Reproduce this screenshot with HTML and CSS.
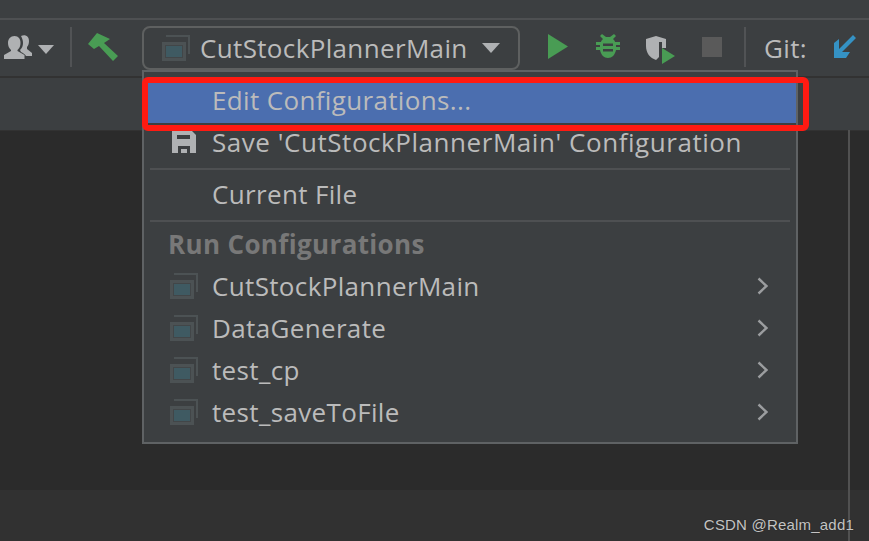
FILE: index.html
```html
<!DOCTYPE html>
<html lang="en">
<head>
<meta charset="utf-8">
<title>Run configurations</title>
<link rel="stylesheet" href="styles.css">
</head>
<body>
<svg class="defs" width="0" height="0">
  <defs>
    <g id="cfg">
      <path d="M4 0H28V19H26V2H4Z" fill="#4c5254"/>
      <rect x="1.500" y="8.500" width="21" height="16" fill="#424648" stroke="#4c5254" stroke-width="3"/>
      <rect x="4" y="11" width="16" height="11" fill="#3f5a62"/>
    </g>
    <path id="chev" d="M1.500 1.500L9.500 9L1.500 16.500" fill="none" stroke="#9b9d9f" stroke-width="2.400"/>
  </defs>
</svg>
<div class="app">
  <div class="top-strip"></div>
  <div class="toolbar">
    <svg class="ico-user" width="28" height="24" viewBox="0 0 28 24"><path fill="#afb1b3" d="M17 1c4-2 8 0 8 5 0 3-1 5-2 6v2l5 4v3h-6c-1-2-3-3-5-4l-1-2c2-2 3-4 3-7 0-3-1-5-2-7Z"/><path fill="#afb1b3" d="M10.500 1c4 0 6 3 6 7 0 3-1 5-3 7v1l7 4v4H0v-4l7-4v-1C5 13 4 11 4 8c0-4 2.500-7 6.500-7Z"/></svg>
    <svg class="ico-caret" width="16" height="9" viewBox="0 0 16 9"><path fill="#afb1b3" d="M0 0H16L8 9Z"/></svg>
    <div class="sep sep-a"></div>
    <svg class="ico-hammer" width="30" height="28" viewBox="0 0 30 28"><path fill="#499c54" d="M0 11L9 0 22 6 16 10 30 23 25 28 11 13 6 16Z"/></svg>
    <div class="combo">
      <svg class="cfg-ico" width="28" height="26" viewBox="0 0 28 26"><use href="#cfg"/></svg>
      <span class="combo-label">CutStockPlannerMain</span>
      <svg class="ico-caret-b" width="18" height="10" viewBox="0 0 18 10"><path fill="#afb1b3" d="M0 0H18L9 10Z"/></svg>
    </div>
    <svg class="ico-run" width="20" height="25" viewBox="0 0 20 25"><path fill="#499c54" d="M0 0L20 12.500 0 25Z"/></svg>
    <svg class="ico-bug" width="24" height="25" viewBox="0 0 24 25"><path fill="#499c54" d="M6 0l4 3h4l4-3 2 2-3 3c1 1 2 2 2 3h5v3h-4v2h4v3h-4c-1 5-4 8-8 8s-7-3-8-8H0v-3h4v-2H0V8h5c0-1 1-2 2-3L4 2Z"/><path fill="#3c3f41" d="M7 9.500h10V12H7zM7 15h10v2.500H7z"/></svg>
    <svg class="ico-cover" width="29" height="28" viewBox="0 0 29 28"><path fill="#afb1b3" d="M0 3L10 0 20 3V12H16V6H13V21L10 24C4 22 0 17 0 10Z"/><path fill="#499c54" d="M16 12L29 20 16 28Z"/></svg>
    <div class="stop"></div>
    <div class="sep sep-b"></div>
    <span class="git">Git:</span>
    <svg class="ico-git" width="22" height="23" viewBox="0 0 22 23"><path fill="#3592c4" d="M19 0l3 3L8 17h8l-4 6H0V8l5-4v10Z"/></svg>
  </div>
  <div class="tabbar"></div>
  <div class="editor"></div>
  <div class="statusbar"></div>
  <div class="vline"></div>

  <div class="menu">
    <div class="item selected"><span class="icon-slot"></span><span>Edit Configurations...</span></div>
    <div class="item save"><span class="icon-slot"><svg class="save-ico" width="24" height="22" viewBox="0 0 24 22"><path fill="#afb1b3" fill-rule="evenodd" d="M0 0H20L24 4V22H0ZM5 4V8H18V4ZM6 15V22H18V15Z"/><rect x="9" y="18" width="6" height="4" fill="#afb1b3"/></svg></span><span>Save 'CutStockPlannerMain' Configuration</span></div>
    <div class="divider"></div>
    <div class="item plain"><span class="icon-slot"></span><span>Current File</span></div>
    <div class="divider"></div>
    <div class="heading">Run Configurations</div>
    <div class="item run"><span class="icon-slot"><svg width="28" height="26" viewBox="0 0 28 26"><use href="#cfg"/></svg></span><span class="grow">CutStockPlannerMain</span><svg class="chev" width="11" height="18" viewBox="0 0 11 18"><use href="#chev"/></svg></div>
    <div class="item run"><span class="icon-slot"><svg width="28" height="26" viewBox="0 0 28 26"><use href="#cfg"/></svg></span><span class="grow">DataGenerate</span><svg class="chev" width="11" height="18" viewBox="0 0 11 18"><use href="#chev"/></svg></div>
    <div class="item run"><span class="icon-slot"><svg width="28" height="26" viewBox="0 0 28 26"><use href="#cfg"/></svg></span><span class="grow">test_cp</span><svg class="chev" width="11" height="18" viewBox="0 0 11 18"><use href="#chev"/></svg></div>
    <div class="item run"><span class="icon-slot"><svg width="28" height="26" viewBox="0 0 28 26"><use href="#cfg"/></svg></span><span class="grow">test_saveToFile</span><svg class="chev" width="11" height="18" viewBox="0 0 11 18"><use href="#chev"/></svg></div>
  </div>
  <div class="highlight"></div>
  <div class="watermark">CSDN @Realm_add1</div>
</div>
</body>
</html>
```
FILE: styles.css
```css
* { box-sizing: border-box; }
html, body { margin: 0; padding: 0; }
body { width: 869px; height: 541px; overflow: hidden; background: #2b2b2b; font-family: "Open Sans", "Noto Sans", sans-serif; }
.defs { position: absolute; }
.app { position: relative; width: 869px; height: 541px; display: flex; flex-direction: column; overflow: hidden; }
.top-strip { height: 20px; background: #3c3f41; border-bottom: 2px solid #4e5052; }
.toolbar { height: 58px; background: #3c3f41; border-bottom: 2px solid #323232; display: flex; align-items: center; position: relative; flex: none; }
.ico-user { margin-left: 4px; margin-top: -3px; flex: none; }
.ico-caret { margin-left: 6px; margin-top: 2px; flex: none; }
.sep { width: 2px; height: 40px; background: #515355; margin-top: -2px; flex: none; }
.sep-a { margin-left: 16px; }
.ico-hammer { margin-left: 16px; flex: none; margin-top: -2px; }
.combo { margin-left: 24px; margin-top: -1px; width: 378px; height: 44px; border: 2px solid #5e6060; border-radius: 8px; display: flex; align-items: center; padding-left: 18px; flex: none; }
.cfg-ico { flex: none; }
.combo-label { margin-left: 10px; font-size: 26px; letter-spacing: 0.35px; color: #bbbbbb; white-space: nowrap; }
.ico-caret-b { margin-left: auto; margin-right: 18px; flex: none; }
.ico-run { margin-left: 28px; margin-top: -3px; flex: none; }
.ico-bug { margin-left: 28px; margin-top: -3px; flex: none; }
.ico-cover { margin-left: 26px; margin-top: 4px; flex: none; }
.stop { margin-left: 27px; margin-top: -2px; width: 20px; height: 20px; background: #5a5a5a; flex: none; }
.sep-b { margin-left: 22px; }
.git { margin-left: 18px; font-size: 26px; letter-spacing: 0.35px; color: #bbbbbb; }
.ico-git { margin-left: 27px; margin-top: -3px; flex: none; }
.tabbar { height: 52px; background: #3c3f41; flex: none; }
.editor { flex: 1; background: #2b2b2b; border-top: 1px solid #323232; }
.statusbar { height: 51px; background: #313131; flex: none; }
.vline { position: absolute; left: 848px; top: 130px; bottom: 0; width: 2px; background: #515151; }

.menu { position: absolute; left: 142px; top: 70px; width: 656px; height: 374px; background: #3c3f41; border: 2px solid #5f6264; padding-top: 11px; display: flex; flex-direction: column; color: #bbbbbb; font-size: 26px; letter-spacing: 0.35px; }
.item { display: flex; align-items: center; height: 42px; flex: none; white-space: nowrap; padding-left: 26px; }
.item.selected { background: #4b6eaf; height: 40px; padding-bottom: 7px; }
.item.save { height: 45px; padding-bottom: 8px; letter-spacing: 0.55px; }
.item.plain { height: 50px; padding-bottom: 2px; }
.icon-slot { width: 42px; display: flex; align-items: center; flex: none; }
.save-ico { margin-left: 2px; }
.grow { flex: 1; }
.chev { flex: none; margin-right: 28px; }
.divider { height: 2px; background: #4e5052; margin: 0 6px; flex: none; }
.heading { height: 43px; line-height: 44px; padding-left: 24px; color: #787878; font-weight: 700; flex: none; }
.highlight { position: absolute; left: 142px; top: 77px; width: 667px; height: 54px; border: 6px solid #ff1a12; border-radius: 6px; }
.watermark { position: absolute; right: 15px; bottom: 8px; font-family: "Liberation Sans", Arial, sans-serif; font-size: 15px; color: #c4c4c4; white-space: nowrap; letter-spacing: 0.2px; text-shadow: 0 0 1px #1c1c1c; }
```
